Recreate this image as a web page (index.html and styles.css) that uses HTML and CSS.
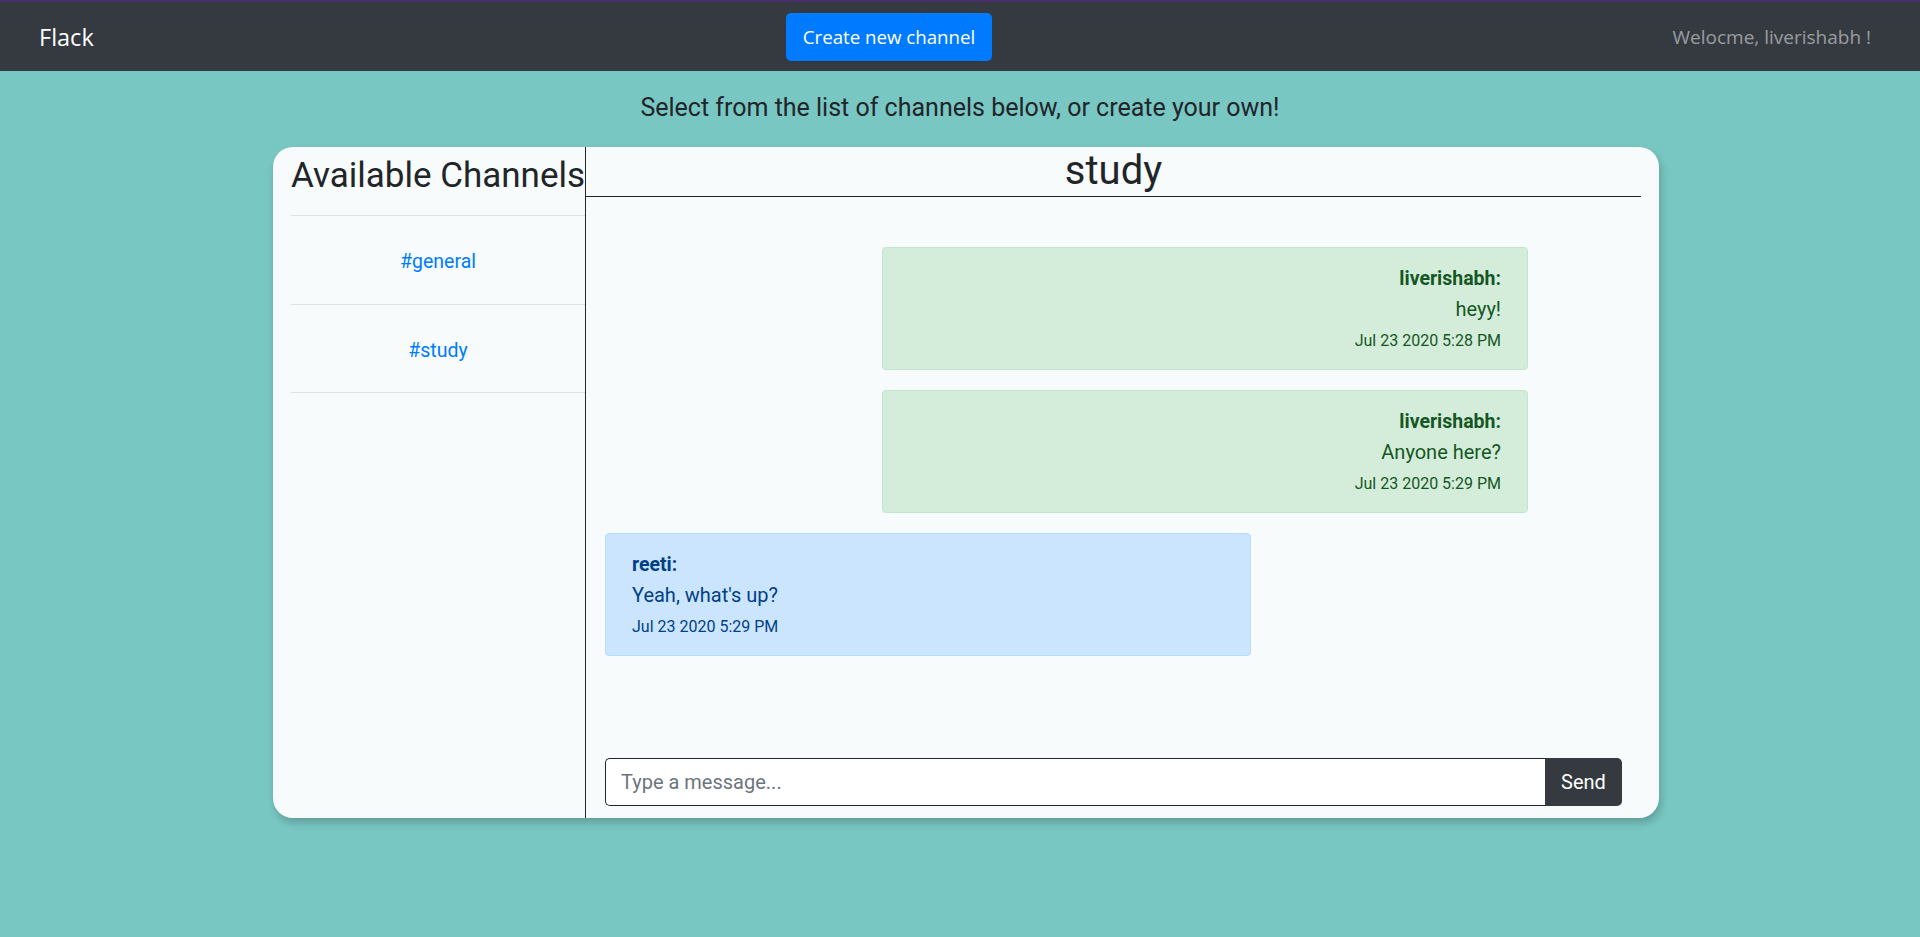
FILE: index.html
```html
<!DOCTYPE html>
<html lang="en">
<head>
<meta charset="utf-8">
<title>Flack</title>
<link rel="stylesheet" href="styles.css">
</head>
<body>
<nav class="navbar">
  <div class="brand-wrap"><a class="brand">Flack</a></div>
  <button class="btn-create">Create new channel</button>
  <span class="welcome">Welocme, liverishabh !</span>
</nav>
<p class="lead">Select from the list of channels below, or create your own!</p>
<main class="card">
  <aside class="sidebar">
    <h2 class="side-title">Available Channels</h2>
    <ul class="channel-list">
      <li class="channel"><a>#general</a></li>
      <li class="channel"><a>#study</a></li>
    </ul>
  </aside>
  <section class="chat">
    <h1 class="chat-title">study</h1>
    <div class="messages">
      <div class="msg msg-mine">
        <div class="msg-name">liverishabh:</div>
        <div class="msg-text">heyy!</div>
        <div class="msg-time">Jul 23 2020 5:28 PM</div>
      </div>
      <div class="msg msg-mine">
        <div class="msg-name">liverishabh:</div>
        <div class="msg-text">Anyone here?</div>
        <div class="msg-time">Jul 23 2020 5:29 PM</div>
      </div>
      <div class="msg msg-other">
        <div class="msg-name">reeti:</div>
        <div class="msg-text">Yeah, what's up?</div>
        <div class="msg-time">Jul 23 2020 5:29 PM</div>
      </div>
    </div>
    <form class="composer">
      <input class="composer-input" type="text" placeholder="Type a message...">
      <button class="composer-send" type="button">Send</button>
    </form>
  </section>
</main>
</body>
</html>
```
FILE: styles.css
```css
* { box-sizing: border-box; }
html, body { margin: 0; padding: 0; }
body {
  background: #79c7c3;
  font-family: Roboto, "Liberation Sans", sans-serif;
  color: #212529;
  min-height: 937px;
}
.navbar {
  height: 71px;
  background: #343a40;
  border-top: 2px solid #4a2d6a;
  display: flex;
  align-items: center;
  padding: 0 49px 0 39px;
  font-family: "Open Sans", "Liberation Sans", sans-serif;
}
.brand-wrap { flex: 0 0 747px; }
.brand { color: #fff; font-size: 23.5px; }
.btn-create {
  width: 206px;
  height: 48px;
  background: #007bff;
  color: #fff;
  border: 0;
  border-radius: 5px;
  font-family: "Open Sans", "Liberation Sans", sans-serif;
  font-size: 18.7px;
  padding: 0;
}
.welcome {
  margin-left: auto;
  color: rgba(255,255,255,.5);
  font-size: 19px;
}
.lead {
  margin: 0;
  padding: 22px 0 0;
  height: 76px;
  text-align: center;
  font-size: 25px;
  line-height: 29px;
}
.card {
  width: 1386px;
  height: 671px;
  margin-left: 273px;
  background: #f7fbfc;
  border-radius: 20px;
  display: flex;
  box-shadow: 2px 5px 8px rgba(0,0,0,.2);
}
.sidebar {
  width: 313px;
  flex: 0 0 313px;
  padding-left: 18px;
  border-right: 1px solid #212529;
}
.side-title {
  margin: 0;
  padding-top: 8px;
  height: 68px;
  font-size: 35px;
  font-weight: 400;
  line-height: 42px;
  white-space: nowrap;
}
.channel-list {
  list-style: none;
  margin: 0;
  padding: 0;
  border-top: 1px solid #dee2e6;
}
.channel {
  height: 88.7px;
  border-bottom: 1px solid #dee2e6;
  display: flex;
  align-items: center;
  justify-content: center;
  padding-top: 3px;
  font-size: 19.5px;
}
.channel a { color: #007bff; }
.chat {
  flex: 1;
  display: flex;
  flex-direction: column;
  padding-right: 18px;
}
.chat-title {
  margin: 0;
  height: 50px;
  border-bottom: 1px solid #212529;
  text-align: center;
  font-size: 40px;
  font-weight: 400;
  line-height: 48px;
}
.messages {
  flex: 1;
  display: flex;
  flex-direction: column;
  gap: 20px;
  padding: 50px 0 0 19px;
}
.msg {
  width: 646px;
  border: 1px solid;
  border-radius: 4px;
  padding: 16px 26px 16px;
  font-size: 20px;
  line-height: 30px;
}
.msg-mine {
  margin-left: 277px;
  background: #d4edda;
  border-color: #c3e6cb;
  color: #155724;
  text-align: right;
}
.msg-other {
  background: #cce5ff;
  border-color: #b8daff;
  color: #004085;
}
.msg-name { font-weight: 700; font-size: 19.5px; }
.msg-time { font-size: 16px; line-height: 24px; margin-top: 5px; }
.composer {
  display: flex;
  margin: 0 19px 12px 19px;
  height: 48px;
}
.composer-input {
  flex: 1;
  border: 1px solid #212529;
  border-right: 0;
  border-radius: 5px 0 0 5px;
  padding: 0 15px;
  font-family: Roboto, "Liberation Sans", sans-serif;
  font-size: 20px;
  color: #495057;
  background: #fff;
}
.composer-input::placeholder { color: #6c757d; }
.composer-send {
  width: 77px;
  background: #343a40;
  color: #fff;
  border: 0;
  border-radius: 0 5px 5px 0;
  font-family: Roboto, "Liberation Sans", sans-serif;
  font-size: 20px;
}
```
